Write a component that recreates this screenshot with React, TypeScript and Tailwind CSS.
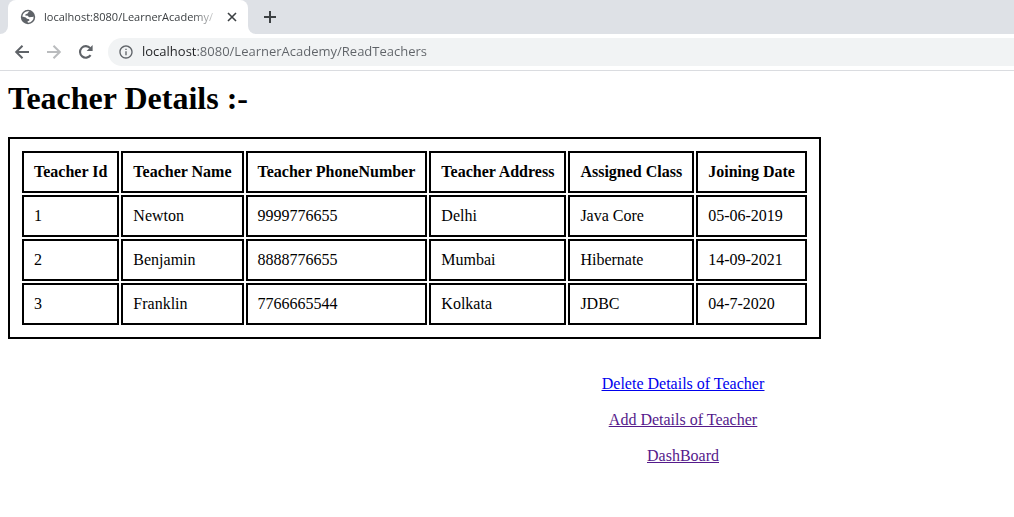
import React from "react";
import { MdInfoOutline } from "react-icons/md";

const columns = [
  "Teacher Id",
  "Teacher Name",
  "Teacher PhoneNumber",
  "Teacher Address",
  "Assigned Class",
  "Joining Date",
];

const teachers = [
  ["1", "Newton", "9999776655", "Delhi", "Java Core", "05-06-2019"],
  ["2", "Benjamin", "8888776655", "Mumbai", "Hibernate", "14-09-2021"],
  ["3", "Franklin", "7766665544", "Kolkata", "JDBC", "04-7-2020"],
];

function GlobeIcon() {
  return (
    <svg viewBox="0 0 16 16" className="size-4 shrink-0" aria-hidden="true">
      <circle cx="8" cy="8" r="7.2" fill="#5f6368" />
      <path
        d="M9.6 2.4 8.2 3.4 7.6 4.6 5.6 5.2 5.2 6.6 7.8 6.8 9 8.2 11.4 8 13.6 7.4 A5.8 5.8 0 0 1 8 13.8 L7.4 12.6 9.4 11.6 9.2 10.2 7 9.8 5.8 8.6 2.3 7.4 A5.8 5.8 0 0 1 9.6 2.4Z"
        fill="#fff"
      />
      <path d="M9.4 2.6 12.6 4.6 13.4 7.4 11 8 9.2 6.4 7.8 5.6 8.4 4Z" fill="#5f6368" />
    </svg>
  );
}

function StrokeIcon({ d, className }: { d: string; className: string }) {
  return (
    <svg viewBox="0 0 20 20" className={className} fill="none" stroke="currentColor" strokeWidth="2" aria-hidden="true">
      <path d={d} />
    </svg>
  );
}

function ReloadIcon() {
  return (
    <svg viewBox="0 0 20 20" className="size-5" aria-hidden="true">
      <path d="M14.6 13.2A5.8 5.8 0 1 1 14.2 6.1" fill="none" stroke="currentColor" strokeWidth="2.1" />
      <path d="M16.6 3V9H10.6Z" fill="currentColor" />
    </svg>
  );
}

function TabStrip() {
  return (
    <div className="flex h-[34px] items-stretch bg-[#dee1e6]">
      <div className="w-2 bg-white">
        <div className="h-full rounded-br-lg bg-[#dee1e6]" />
      </div>
      <div className="bg-[#dee1e6]">
        <div className="flex h-full w-60 items-center rounded-t-lg bg-white pr-2 pl-3">
          <GlobeIcon />
          <span className="ml-2 w-[180px] text-[11px] whitespace-nowrap text-[#3c4043] [mask-image:linear-gradient(to_right,#000_148px,transparent_176px)]">
            localhost:8080/LearnerAcademy/
          </span>
          <button type="button" aria-label="Close tab" className="flex size-4 items-center justify-center text-[#3c4043]">
            <StrokeIcon d="M5 5 15 15M15 5 5 15" className="size-4" />
          </button>
        </div>
      </div>
      <div className="w-2 bg-white">
        <div className="h-full rounded-bl-lg bg-[#dee1e6]" />
      </div>
      <button type="button" aria-label="New tab" className="flex w-7 items-center justify-center text-[#3c4043]">
        <StrokeIcon d="M10 4V16M4 10H16" className="size-5" />
      </button>
    </div>
  );
}

function Toolbar() {
  return (
    <div className="flex h-[37px] items-center border-b border-[#dadce0] bg-white pl-3">
      <div className="flex items-center gap-3 text-[#5f6368]">
        <button type="button" aria-label="Back">
          <StrokeIcon d="M17 10H4.5M10.5 3.7 4.2 10 10.5 16.3" className="size-5" />
        </button>
        <button type="button" aria-label="Forward" disabled className="text-[#babcbe]">
          <StrokeIcon d="M3 10H15.5M9.5 3.7 15.8 10 9.5 16.3" className="size-5" />
        </button>
        <button type="button" aria-label="Reload">
          <ReloadIcon />
        </button>
      </div>
      <div className="ml-3 flex h-7 flex-1 items-center gap-2 rounded-l-full bg-[#f1f3f4] pl-[10px]">
        <MdInfoOutline className="size-4 shrink-0 text-[#5f6368]" />
        <input
          type="text"
          aria-label="Address"
          defaultValue="localhost:8080/LearnerAcademy/ReadTeachers"
          className="min-w-0 flex-1 bg-[linear-gradient(to_right,#202124_54px,#5f6368_54px)] bg-clip-text text-[13px] text-transparent outline-none"
        />
      </div>
    </div>
  );
}

export default function App() {
  return (
    <div className="min-h-screen bg-white font-['Open_Sans','Noto_Sans',sans-serif]">
      <TabStrip />
      <Toolbar />
      <main className="px-2 pt-[9px] pb-8 font-['Liberation_Serif',serif] text-base leading-[18px] text-black">
        <h1 className="mb-[21px] text-[32px] leading-9 font-bold">Teacher Details :-</h1>
        <table className="border-separate border-spacing-[2px] border-2 border-black p-[10px]">
          <thead>
            <tr>
              {columns.map((name) => (
                <th key={name} scope="col" className="border-2 border-black p-[10px] text-left font-bold whitespace-nowrap">
                  {name}
                </th>
              ))}
            </tr>
          </thead>
          <tbody>
            {teachers.map((row) => (
              <tr key={row[0]}>
                {row.map((value, i) => (
                  <td key={i} className="border-2 border-black p-[10px] whitespace-nowrap">
                    {value}
                  </td>
                ))}
              </tr>
            ))}
          </tbody>
        </table>
        <nav className="mt-9 ml-[352px] flex flex-col items-center gap-[18px] underline">
          <a href="#delete" className="text-[#0000ee]">Delete Details of Teacher</a>
          <a href="#add" className="text-[#551a8b]">Add Details of Teacher</a>
          <a href="#dashboard" className="text-[#551a8b]">DashBoard</a>
        </nav>
      </main>
    </div>
  );
}
